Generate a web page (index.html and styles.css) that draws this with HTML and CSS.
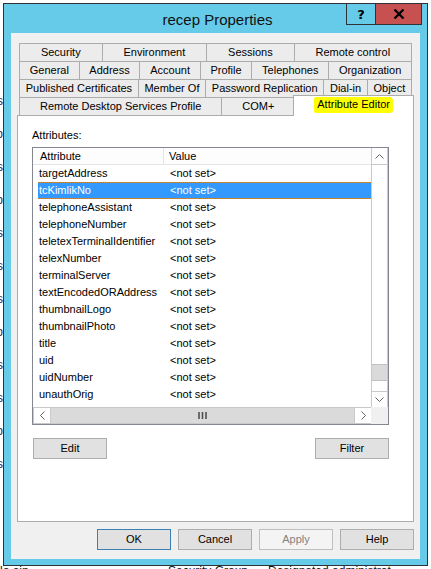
FILE: index.html
```html
<!DOCTYPE html>
<html>
<head>
<meta charset="utf-8">
<title>recep Properties</title>
<link rel="stylesheet" href="styles.css">
</head>
<body>
<div class="desktop">
  <div class="bg-left">
    <span>Users</span><span>Group</span><span>Admins</span><span>Rep</span><span>Computers</span><span>Guests</span><span>Owners</span><span>Group</span><span>Users</span><span>Admins</span><span>Group</span><span>Users</span>
  </div>
  <div class="bg-bottom">
    <span class="bg-a">lo ain</span><span class="bg-b">Security Group ...</span><span class="bg-c">Designated administrat</span>
  </div>

  <div class="window">
    <div class="titlebar">
      <span class="title">recep Properties</span>
    </div>
    <div class="caption-btns">
      <div class="cap cap-help">?</div>
      <div class="cap cap-close">
        <svg width="12" height="10" viewBox="0 0 12 10"><path d="M1.5 0.5 L10.5 9.5 M10.5 0.5 L1.5 9.5" stroke="#000" stroke-width="2.2" fill="none"/></svg>
      </div>
    </div>
    <div class="client">
      <div class="tabs">
        <div class="tabrow">
          <div class="tab">Security</div><div class="tab">Environment</div><div class="tab">Sessions</div><div class="tab">Remote control</div>
        </div>
        <div class="tabrow">
          <div class="tab">General</div><div class="tab">Address</div><div class="tab">Account</div><div class="tab">Profile</div><div class="tab">Telephones</div><div class="tab">Organization</div>
        </div>
        <div class="tabrow">
          <div class="tab">Published Certificates</div><div class="tab">Member Of</div><div class="tab">Password Replication</div><div class="tab">Dial-in</div><div class="tab">Object</div>
        </div>
        <div class="tabrow">
          <div class="tab tab-wide">Remote Desktop Services Profile</div><div class="tab">COM+</div><div class="tab tab-active"><span class="marker">Attribute Editor</span></div>
        </div>
      </div>
      <div class="panel">
        <div class="label">Attributes:</div>
        <div class="listbox">
          <div class="list-main">
            <div class="list-view">
              <div class="hdr">
                <div class="hdr-col hdr-attr">Attribute</div>
                <div class="hdr-col hdr-val">Value</div>
              </div>
              <div class="rows">
                <div class="row"><span class="c-attr">targetAddress</span><span class="c-val">&lt;not set&gt;</span></div>
                <div class="row sel"><span class="c-attr">tcKimlikNo</span><span class="c-val">&lt;not set&gt;</span></div>
                <div class="row"><span class="c-attr">telephoneAssistant</span><span class="c-val">&lt;not set&gt;</span></div>
                <div class="row"><span class="c-attr">telephoneNumber</span><span class="c-val">&lt;not set&gt;</span></div>
                <div class="row"><span class="c-attr">teletexTerminalIdentifier</span><span class="c-val">&lt;not set&gt;</span></div>
                <div class="row"><span class="c-attr">telexNumber</span><span class="c-val">&lt;not set&gt;</span></div>
                <div class="row"><span class="c-attr">terminalServer</span><span class="c-val">&lt;not set&gt;</span></div>
                <div class="row"><span class="c-attr">textEncodedORAddress</span><span class="c-val">&lt;not set&gt;</span></div>
                <div class="row"><span class="c-attr">thumbnailLogo</span><span class="c-val">&lt;not set&gt;</span></div>
                <div class="row"><span class="c-attr">thumbnailPhoto</span><span class="c-val">&lt;not set&gt;</span></div>
                <div class="row"><span class="c-attr">title</span><span class="c-val">&lt;not set&gt;</span></div>
                <div class="row"><span class="c-attr">uid</span><span class="c-val">&lt;not set&gt;</span></div>
                <div class="row"><span class="c-attr">uidNumber</span><span class="c-val">&lt;not set&gt;</span></div>
                <div class="row"><span class="c-attr">unauthOrig</span><span class="c-val">&lt;not set&gt;</span></div>
              </div>
            </div>
            <div class="vscroll">
              <div class="sb-btn sb-up"><svg width="9" height="5" viewBox="0 0 9 5"><path d="M0.5 4.5 L4.5 0.5 L8.5 4.5" stroke="#606060" fill="none"/></svg></div>
              <div class="sb-track-v"><div class="sb-thumb-v"></div></div>
              <div class="sb-btn sb-down"><svg width="9" height="5" viewBox="0 0 9 5"><path d="M0.5 0.5 L4.5 4.5 L8.5 0.5" stroke="#606060" fill="none"/></svg></div>
            </div>
          </div>
          <div class="hscroll-row">
            <div class="hscroll">
              <div class="sb-btn sb-left"><svg width="5" height="9" viewBox="0 0 5 9"><path d="M4.5 0.5 L0.5 4.5 L4.5 8.5" stroke="#606060" fill="none"/></svg></div>
              <div class="sb-thumb-h"><svg width="9" height="7" viewBox="0 0 9 7"><path d="M1 0 V7 M4.5 0 V7 M8 0 V7" stroke="#505050" stroke-width="1.6"/></svg></div>
              <div class="sb-btn sb-right"><svg width="5" height="9" viewBox="0 0 5 9"><path d="M0.5 0.5 L4.5 4.5 L0.5 8.5" stroke="#606060" fill="none"/></svg></div>
            </div>
            <div class="sb-corner"></div>
          </div>
        </div>
        <div class="panel-btns">
          <div class="btn btn-edit">Edit</div>
          <div class="btn">Filter</div>
        </div>
      </div>
      <div class="dlg-btns">
        <div class="btn btn-default">OK</div>
        <div class="btn">Cancel</div>
        <div class="btn btn-disabled">Apply</div>
        <div class="btn">Help</div>
      </div>
    </div>
  </div>
</div>
</body>
</html>
```

FILE: styles.css
```css
html, body {
  margin: 0;
  padding: 0;
}
body {
  font-family: "Liberation Sans", Arial, sans-serif;
  font-size: 11px;
  color: #000;
  background: #fff;
}
.desktop {
  position: relative;
  width: 431px;
  height: 569px;
  overflow: hidden;
  background: #ffffff;
}

/* background window remains */
.bg-left {
  width: 3px;
  height: 563px;
  overflow: hidden;
  display: flex;
  flex-direction: column;
  align-items: flex-end;
  padding-top: 95px;
  box-sizing: border-box;
  gap: 20px;
  font-size: 12px;
  line-height: 13px;
  color: #2a2a5a;
  white-space: nowrap;
}
.bg-bottom {
  display: flex;
  white-space: nowrap;
  font-size: 12px;
  line-height: 12px;
  margin-top: 2px;
  color: #111;
}
.bg-a { width: 168px; }
.bg-b { width: 100px; }

/* dialog window */
.window {
  position: absolute;
  left: 3px;
  top: 3px;
  width: 425px;
  height: 563px;
  box-sizing: border-box;
  border: 1px solid #2d3338;
  background: #65cbe9;
  padding: 0 7px 6px 7px;
  display: flex;
  flex-direction: column;
}
.titlebar {
  height: 29px;
  display: flex;
  justify-content: center;
  align-items: center;
  flex: none;
}
.title {
  font-size: 15px;
  color: #111;
  margin-top: 1px;
  margin-left: 4px;
}
.caption-btns {
  position: absolute;
  top: -1px;
  right: 5px;
  display: flex;
}
.cap {
  height: 22px;
  box-sizing: border-box;
  border: 1px solid #2d3338;
  display: flex;
  align-items: center;
  justify-content: center;
}
.cap-help {
  width: 30px;
  background: #65cbe9;
  font-weight: bold;
  font-size: 13px;
  font-family: "DejaVu Sans", "Liberation Sans", sans-serif;
}
.cap-close {
  width: 47px;
  margin-left: -1px;
  background: #c75050;
}

.client {
  flex: 1;
  background: #f0f0f0;
  display: flex;
  flex-direction: column;
  padding: 10px 6px 0 6px;
  min-height: 0;
}

/* tabs */
.tabs {
  margin: 0 2px;
  display: flex;
  flex-direction: column;
}
.tabrow {
  display: flex;
  height: 18px;
}
.tab {
  flex: 1 1 auto;
  box-sizing: border-box;
  border: 1px solid #acacac;
  border-bottom: 0;
  margin-left: -1px;
  background: #ececec;
  display: flex;
  align-items: center;
  justify-content: center;
  white-space: nowrap;
  padding: 0 4px 1px 4px;
}
.tab:first-child {
  margin-left: 0;
}
.tab-active {
  position: relative;
  z-index: 1;
  background: #ffffff;
  margin: -2px -2px -1px -2px;
  padding-bottom: 3px;
}
.marker {
  background: #ffff00;
  padding: 1px 3px 3px 3px;
  border-radius: 2px 4px 3px 2px;
}

/* panel */
.panel {
  flex: 1;
  background: #ffffff;
  border: 1px solid #acacac;
  padding: 12px 0 0 14px;
  display: flex;
  flex-direction: column;
}
.label {
  height: 14px;
  line-height: 14px;
}
.listbox {
  margin-top: 5px;
  width: 357px;
  height: 278px;
  box-sizing: border-box;
  border: 1px solid #828790;
  display: flex;
  flex-direction: column;
}
.list-main {
  flex: 1;
  display: flex;
  min-height: 0;
}
.list-view {
  flex: 1;
  overflow: hidden;
}
.hdr {
  display: flex;
  height: 17px;
  box-sizing: border-box;
  border-bottom: 1px solid #e5e5e5;
  background: #fdfdfd;
  line-height: 16px;
}
.hdr-col {
  white-space: nowrap;
}
.hdr-attr {
  width: 131px;
  padding-left: 7px;
  box-sizing: border-box;
  border-right: 1px solid #e5e5e5;
}
.hdr-val {
  padding-left: 5px;
}
.rows {
  display: flex;
  flex-direction: column;
}
.row {
  height: 17px;
  line-height: 17px;
  margin-left: 5px;
  display: flex;
  white-space: nowrap;
  box-sizing: border-box;
}
.c-attr {
  width: 126px;
  padding-left: 1px;
  box-sizing: border-box;
}
.c-val {
  padding-left: 6px;
}
.row.sel {
  background: #3399ff;
  color: #ffffff;
  border-top: 1px dotted #c98a3a;
  border-bottom: 1px dotted #c98a3a;
  line-height: 15px;
}

/* scrollbars */
.vscroll {
  width: 17px;
  flex: none;
  display: flex;
  flex-direction: column;
  box-sizing: border-box;
  border-left: 1px solid #c9c9c9;
  border-right: 1px solid #c9c9c9;
  background: #ffffff;
}
.sb-btn {
  display: flex;
  align-items: center;
  justify-content: center;
  box-sizing: border-box;
  flex: none;
}
.sb-up {
  height: 17px;
  border-bottom: 1px solid #c9c9c9;
}
.sb-down {
  height: 16px;
  border-top: 1px solid #c9c9c9;
}
.sb-track-v {
  flex: 1;
  display: flex;
  flex-direction: column;
  justify-content: flex-end;
  padding-bottom: 10px;
}
.sb-thumb-v {
  height: 17px;
  box-sizing: border-box;
  background: #dadada;
  border-top: 1px solid #c2c2c2;
  border-bottom: 1px solid #c2c2c2;
}
.hscroll-row {
  height: 17px;
  display: flex;
  flex: none;
}
.hscroll {
  flex: 1;
  display: flex;
  box-sizing: border-box;
  border-top: 1px solid #c9c9c9;
  border-bottom: 1px solid #c9c9c9;
  background: #ffffff;
}
.sb-left {
  width: 18px;
  border-left: 1px solid #c9c9c9;
  border-right: 1px solid #c9c9c9;
}
.sb-right {
  width: 17px;
  border-left: 1px solid #c9c9c9;
}
.sb-thumb-h {
  flex: 1;
  background: #dadada;
  display: flex;
  align-items: center;
  justify-content: center;
}
.sb-corner {
  width: 17px;
  background: #f0f0f0;
}

/* buttons */
.panel-btns {
  width: 357px;
  margin-top: 13px;
  display: flex;
  justify-content: space-between;
}
.btn {
  width: 74px;
  height: 21px;
  box-sizing: border-box;
  border: 1px solid #adadad;
  background: #e1e1e1;
  display: flex;
  align-items: center;
  justify-content: center;
  padding-bottom: 1px;
}
.btn-edit {
  margin-left: 1px;
}
.btn-default {
  border-color: #3c7fb1;
}
.btn-disabled {
  background: #f4f4f4;
  border-color: #bfbfbf;
  color: #838383;
}
.dlg-btns {
  display: flex;
  justify-content: flex-end;
  gap: 7px;
  padding: 7px 0 9px 0;
  flex: none;
}
```
